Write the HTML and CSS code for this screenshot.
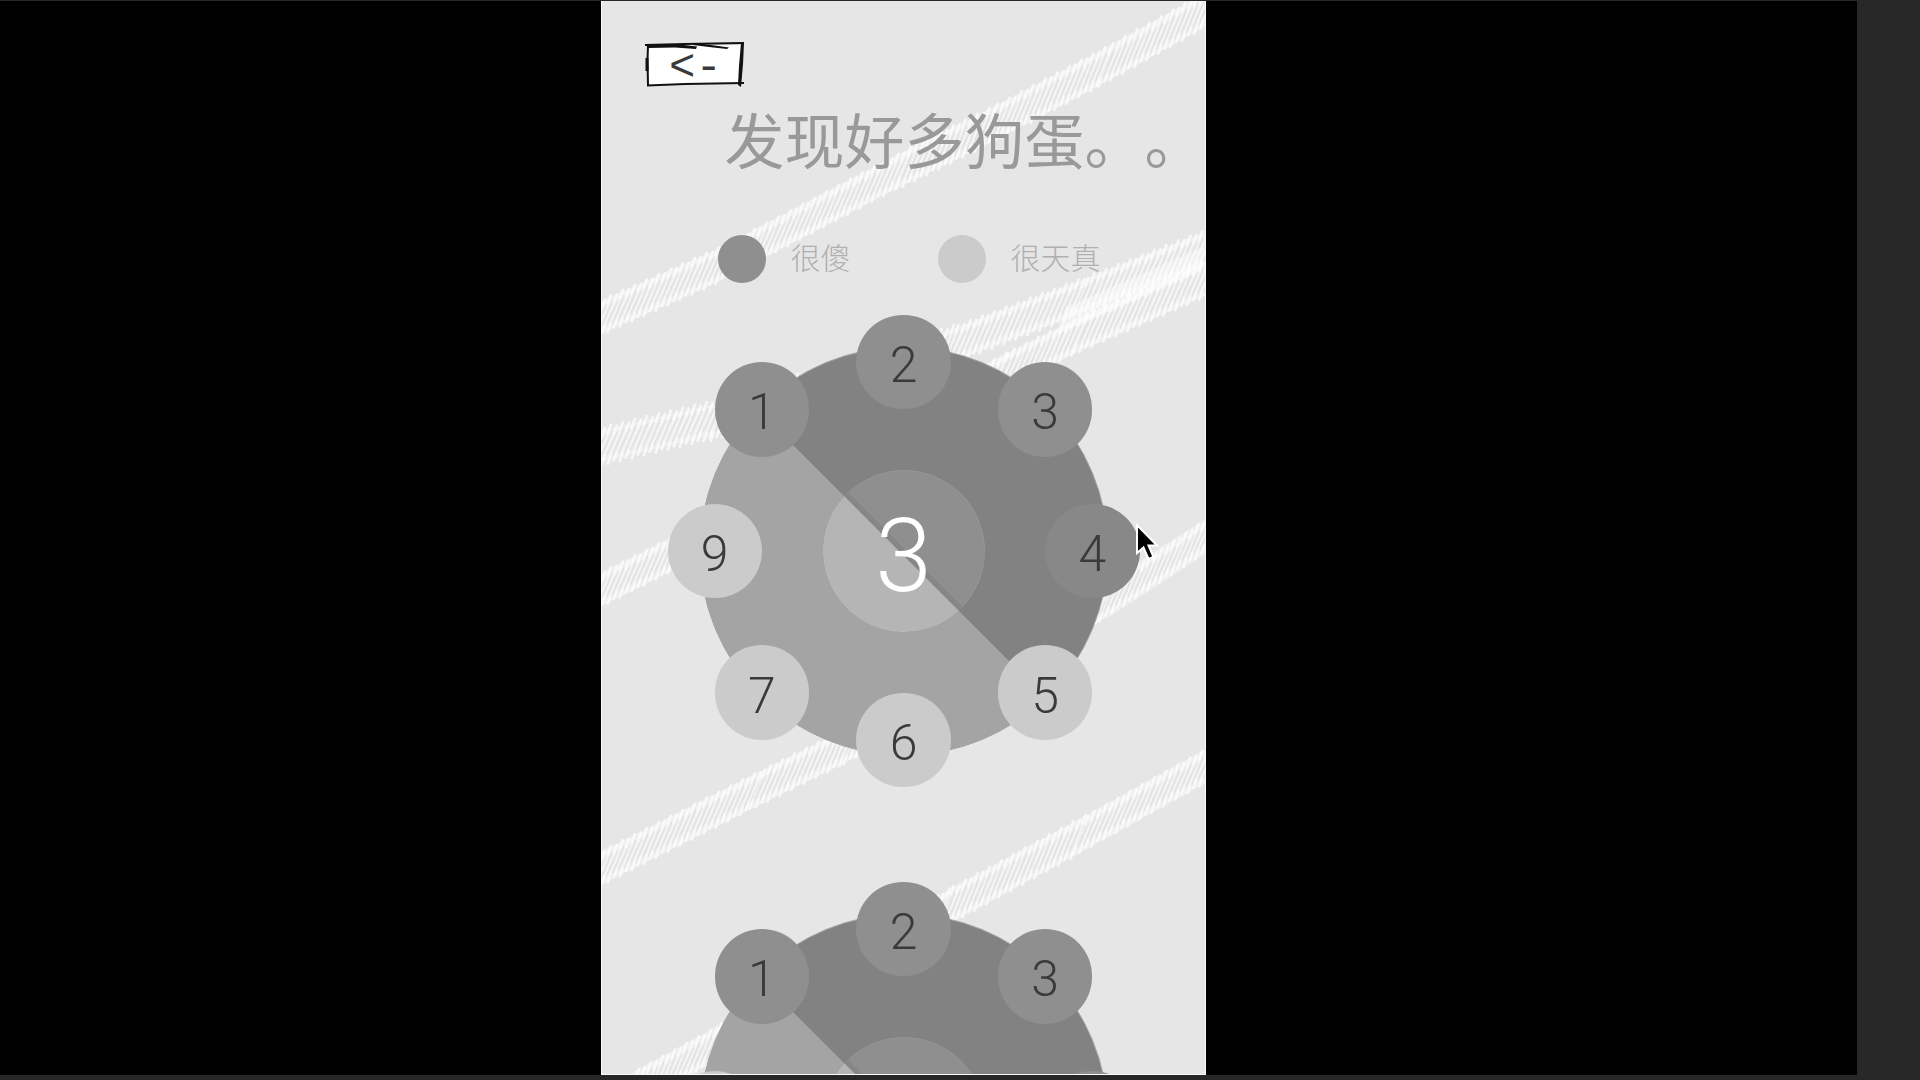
FILE: index.html
```html
<!DOCTYPE html>
<html lang="zh-CN">
<head>
  <meta charset="UTF-8">
  <meta name="viewport" content="width=device-width, initial-scale=1.0">
  <title>发现好多狗蛋</title>
  <link rel="stylesheet" href="styles.css">
</head>
<body>
  <!-- shared wheel disc -->
  <svg class="defs" aria-hidden="true">
    <symbol id="disc" viewBox="-206 -206 412 412">
      <circle r="204" fill="#828282" stroke="#a9a9a9" stroke-width="1"/>
      <path d="M-146.730 -141.730A204 204 0 0 0 141.730 146.730Z" fill="#a4a4a4"/>
      <circle r="81" fill="#8f8f8f"/>
      <path d="M-56 -58.500L58.500 56L54.700 59.700L-59.700 -54.700Z" fill="#868686"/>
      <path d="M-59.720 -54.720A81 81 0 0 0 54.720 59.720Z" fill="#b5b5b5"/>
      <circle r="80.500" fill="none" stroke="#fff" stroke-opacity=".06"/>
    </symbol>
  </svg>

  <main class="stage">
    <div class="phone">
      <svg class="scribble" id="scribble" viewBox="0 0 604 1074" preserveAspectRatio="xMidYMin slice" aria-hidden="true"></svg>

      <button class="back-btn" aria-label="返回">
        <svg viewBox="0 0 100 46" preserveAspectRatio="none" aria-hidden="true">
          <path d="M3 4L96 3L95 41L4 43Z" fill="#fff"/>
          <path d="M0 3L40 2L99 1" fill="none" stroke="#111" stroke-width="2"/>
          <path d="M1 3L30 2L52 4.500L51 7L30 5.500L3 6Z M50 1L66 3L84 5.500L82 7L64 5L48 3Z" fill="#111"/>
          <path d="M3 4L2.500 18L3 43" fill="none" stroke="#111" stroke-width="2"/>
          <path d="M2 16L2 29" fill="none" stroke="#111" stroke-width="3"/>
          <path d="M2 43.500L40 42L99 41" fill="none" stroke="#111" stroke-width="2"/>
          <path d="M96 1L99 1L98 22L96 45L93 43L94 24Z" fill="#111"/>
        </svg>
        <span>&lt;-</span>
      </button>

      <h1>发现好多狗蛋。。</h1>

      <ul class="legend">
        <li><span class="dot dark"></span>很傻</li>
        <li><span class="dot light"></span>很天真</li>
      </ul>

      <section class="wheels">
        <div class="wheel">
          <svg class="disc"><use href="#disc"/></svg>
          <output class="value">3</output>
          <button class="num dark n1">1</button>
          <button class="num dark n2">2</button>
          <button class="num dark n3">3</button>
          <button class="num dark n4 active">4</button>
          <button class="num light n5">5</button>
          <button class="num light n6">6</button>
          <button class="num light n7">7</button>
          <button class="num light n9">9</button>
          <svg class="cursor" viewBox="0 0 26 40" aria-hidden="true">
            <path d="M2 2V30L8.500 24.500L13.500 36L18.500 34L13.500 22.500H22Z" fill="#000" stroke="#fff" stroke-width="2"/>
          </svg>
        </div>
        <div class="wheel">
          <svg class="disc"><use href="#disc"/></svg>
          <button class="num dark n1">1</button>
          <button class="num dark n2">2</button>
          <button class="num dark n3">3</button>
          <button class="num dark n4" aria-label="4"></button>
          <button class="num light n9" aria-label="9"></button>
        </div>
      </section>
    </div>
  </main>
  <aside class="gutter"></aside>
  <script src="scribble.js"></script>
</body>
</html>
```

FILE: styles.css
```css
* {margin: 0; padding: 0; box-sizing: border-box;}
body {
  font-family: Roboto, "Noto Sans CJK SC", sans-serif;
  font-weight: 300;
  background: #272727;
  color: #3a3a3a;
  height: 100vh;
  display: flex;
  padding: 1px 0 5px;
  overflow: hidden;
}
button {
  font: inherit;
  color: inherit;
  border: none;
  cursor: pointer;
}
.defs {
  position: absolute;
  width: 0;
  height: 0;
}
.stage {
  flex: 1;
  display: flex;
  justify-content: center;
  background: #000;
  padding-right: 50px;
}
.gutter {
  width: 63px;
  background: #282828;
}
.phone {
  position: relative;
  height: 100%;
  aspect-ratio: 9 / 16;
  background: #e6e6e6;
  border: 1px solid #fafafa;
  border-top: none;
  overflow: hidden;
  display: flex;
  flex-direction: column;
  padding-top: 41px;
}
.scribble {
  position: absolute;
  inset: 0;
  width: 100%;
  height: 100%;
}
.scribble path {
  fill: none;
}
.back-btn {
  position: relative;
  width: 100px;
  height: 46px;
  margin-left: 43px;
  padding-top: 6px;
  background: none;
  font-family: "Liberation Mono", monospace;
  font-size: 44px;
  font-weight: 400;
  line-height: 40px;
}
.back-btn svg {
  position: absolute;
  inset: 0;
  width: 100%;
  height: 100%;
}
.back-btn span {
  position: relative;
}
h1 {
  position: relative;
  margin: 16px 0 0 122px;
  font-size: 60px;
  font-weight: 400;
  line-height: 80px;
  white-space: nowrap;
  text-spacing-trim: space-all;
  font-kerning: none;
  color: #999;
}
.legend {
  position: relative;
  display: flex;
  gap: 88px;
  margin: 51px 0 32px 116px;
  list-style: none;
  font-size: 30px;
  line-height: 48px;
  color: #b0b0b0;
}
.legend li {
  display: flex;
  gap: 24px;
}
.dot {
  width: 48px;
  height: 48px;
  border-radius: 50%;
}
.dark {
  background: #8f8f8f;
}
.light {
  background: #cbcbcb;
}
.wheels {
  display: flex;
  flex-direction: column;
  align-items: center;
  gap: 95px;
}
.wheel {
  position: relative;
  flex: none;
  width: 472px;
  height: 472px;
  display: grid;
  grid-template: repeat(10, 1fr) / repeat(10, 1fr);
}
.disc {
  grid-area: 1 / 1 / -1 / -1;
  place-self: center;
  width: 412px;
  height: 412px;
}
.value {
  grid-area: 1 / 1 / -1 / -1;
  place-self: center;
  padding-top: 10px;
  font-size: 102px;
  line-height: 120px;
  color: #fff;
}
.num {
  border-radius: 50%;
  padding-top: 6px;
  font-size: 50px;
  line-height: 60px;
}
.active {
  background: #888;
}
.n1 {grid-area: 2 / 2 / span 2 / span 2;}
.n2 {grid-area: 1 / 5 / span 2 / span 2;}
.n3 {grid-area: 2 / 8 / span 2 / span 2;}
.n4 {grid-area: 5 / 9 / span 2 / span 2;}
.n5 {grid-area: 8 / 8 / span 2 / span 2;}
.n6 {grid-area: 9 / 5 / span 2 / span 2;}
.n7 {grid-area: 8 / 2 / span 2 / span 2;}
.n9 {grid-area: 5 / 1 / span 2 / span 2;}
.cursor {
  position: absolute;
  left: 467px;
  top: 208px;
  width: 26px;
  height: 40px;
}
```

FILE: scribble.js
```js
// chalk bands: centre points of each band, drawn as slanted hatching
const bands = [
  [[-10, 321], [116, 265], [303, 167], [389, 125], [505, 64], [615, 3]],
  [[-10, 448], [117, 418], [350, 345], [480, 296], [615, 243]],
  [[-10, 594], [68, 555], [400, 372], [480, 333], [615, 274]],
  [[-10, 873], [156, 789], [250, 743], [506, 600], [615, 529]],
  [[30, 1090], [113, 1045], [345, 908], [480, 835], [615, 760]]
];
const svg = document.getElementById("scribble");

function addPath(d, color, width) {
  const p = document.createElementNS("http://www.w3.org/2000/svg", "path");
  p.setAttribute("d", d);
  p.setAttribute("stroke", color);
  p.setAttribute("stroke-width", width);
  svg.appendChild(p);
}

bands.forEach((pts) => {
  let shade = "", hatch = "", tips = "";
  addPath("M" + pts.join("L"), "rgba(255,255,255,.35)", 30);
  for (let i = 0; i < pts.length - 1; i++) {
    const [x1, y1] = pts[i], [x2, y2] = pts[i + 1];
    for (let x = x1; x < x2; x += 6) {
      const y = y1 + (y2 - y1) * (x - x1) / (x2 - x1);
      const h = 20 + Math.abs(x * 7 % 4);
      shade += `M${x + 9} ${y - h + 7}L${x - 4} ${y + h - 7}`;
      hatch += `M${x + 8} ${y - h}L${x - 8} ${y + h}`;
      tips += `M${x + 8} ${y - h}l-4 10M${x - 4} ${y + h - 10}l-4 10`;
    }
  }
  addPath(shade, "rgba(205,205,205,.35)", 2);
  addPath(hatch, "rgba(255,255,255,.4)", 2);
  addPath(tips, "rgba(255,255,255,.5)", 3);
});

let patch = "";
for (let x = 462; x < 600; x += 4) {
  const y = 320 - (x - 462) * 0.44;
  patch += `M${x + 6} ${y - 14}l-10 26`;
}
addPath(patch, "rgba(255,255,255,.45)", 5);
```
